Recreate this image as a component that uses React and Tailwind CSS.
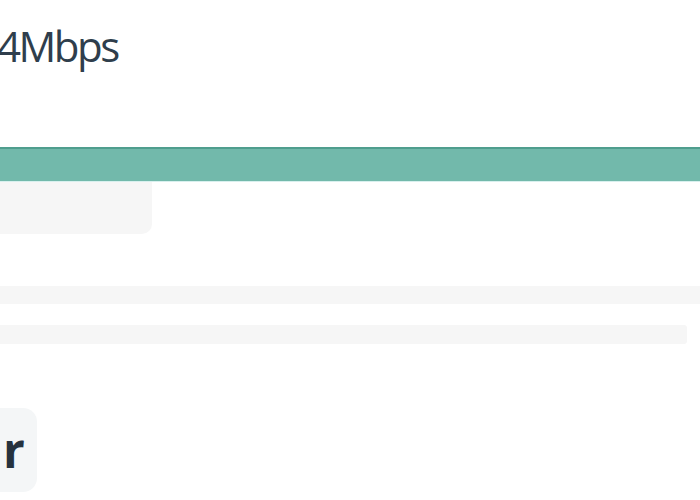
export default function App() {
  return (
    <div className="w-[700px] h-[500px] overflow-hidden bg-white" style={{ fontFamily: '"Open Sans", sans-serif' }}>
      {/* speed readout */}
      <div className="h-[147px] pt-[14px]">
        <div className="-ml-[3px] text-[42px] leading-[64px] text-[#2f3e4c] tracking-[-2.5px]">4Mbps</div>
      </div>

      {/* progress bar */}
      <div className="h-[35px] bg-[#72b9ab] border-t-[2px] border-[#4f9e8e] border-b border-b-[#d8f0ee]" />

      <div className="w-[152px] h-[52px] bg-[#f6f6f6] rounded-br-[10px]" />

      {/* skeleton lines */}
      <div className="mt-[52px] flex flex-col gap-[21px]">
        <div className="h-[18px] bg-[#f6f6f6]" />
        <div className="h-[19px] w-[687px] bg-[#f6f6f6] rounded-r-[3px]" />
      </div>

      <div className="mt-[64px] w-[37px] h-[84px] bg-[#f4f6f7] rounded-r-[14px] flex items-center pl-[3px]">
        <span className="text-[48px] font-bold leading-none text-[#26323e] tracking-[-1px]">r</span>
      </div>
    </div>
  );
}
